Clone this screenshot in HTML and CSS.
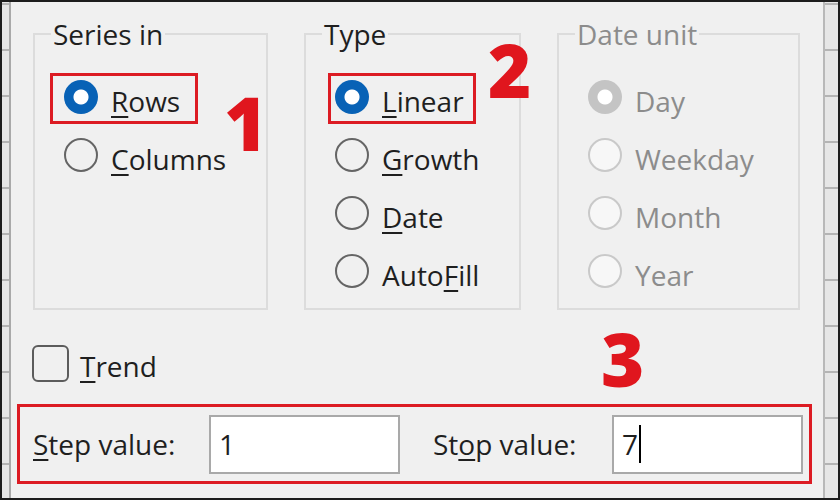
FILE: index.html
```html
<!DOCTYPE html>
<html>
<head>
<meta charset="UTF-8">
<link rel="stylesheet" href="styles.css">
</head>
<body>
<div class="screen">
	<div class="sheet left"></div>

	<div class="dialog">
		<div class="groups">
			<fieldset class="group series">
				<legend>Series in</legend>
				<div class="option marked"><span class="radio on"></span><span class="label"><u>R</u>ows</span></div>
				<div class="option"><span class="radio"></span><span class="label"><u>C</u>olumns</span></div>
			</fieldset>

			<fieldset class="group type">
				<legend>Type</legend>
				<div class="option marked"><span class="radio on"></span><span class="label"><u>L</u>inear</span></div>
				<div class="option"><span class="radio"></span><span class="label"><u>G</u>rowth</span></div>
				<div class="option"><span class="radio"></span><span class="label"><u>D</u>ate</span></div>
				<div class="option"><span class="radio"></span><span class="label">Auto<u>F</u>ill</span></div>
			</fieldset>

			<fieldset class="group unit disabled">
				<legend>Date unit</legend>
				<div class="option"><span class="radio on"></span><span class="label">Day</span></div>
				<div class="option"><span class="radio"></span><span class="label">Weekday</span></div>
				<div class="option"><span class="radio"></span><span class="label">Month</span></div>
				<div class="option"><span class="radio"></span><span class="label">Year</span></div>
			</fieldset>
		</div>

		<div class="trend">
			<span class="checkbox"></span><span class="label"><u>T</u>rend</span>
		</div>

		<div class="values">
			<div class="field">
				<span class="label"><u>S</u>tep value:</span>
				<div class="textbox">1</div>
			</div>
			<div class="field stop">
				<span class="label">St<u>o</u>p value:</span>
				<div class="textbox">7<span class="caret"></span></div>
			</div>
		</div>
	</div>

	<div class="sheet right"></div>

	<span class="mark n1">1</span>
	<span class="mark n2">2</span>
	<span class="mark n3">3</span>
</div>
</body>
</html>
```

FILE: styles.css
```css
body{
	margin:0;
	background:#1c1c1c;
}
.screen{
	position:relative;
	width:840px;
	height:500px;
	box-sizing:border-box;
	border:2px solid #1c1c1c;
	display:flex;
	font-family:"Open Sans", "Noto Sans", sans-serif;
	font-size:28px;
	color:#1f1f1f;
}
.sheet{
	background-color:#e6e6e6;
	background-image:repeating-linear-gradient(to bottom, transparent 0 1px, #b4b4b4 1px 3px, transparent 3px 46px);
}
.sheet.left{
	width:7px;
	border-right:2px solid #a9a9a9;
}
.sheet.right{
	width:13px;
	border-left:2px solid #b8b8b8;
}
.dialog{
	flex:1;
	background:#f0f0f0;
	padding-top:16px;
}

/* group boxes */
.groups{
	display:flex;
	gap:36px;
	margin-left:22px;
}
.group{
	margin:0;
	padding:18px 0 8px 0;
	border:2px solid #dcdcdc;
	min-width:0;
}
.group legend{
	margin-left:16px;
	padding:0 2px;
	line-height:32px;
}
.series{ width:235px; box-sizing:border-box; }
.type{ width:217px; box-sizing:border-box; }
.unit{ width:243px; box-sizing:border-box; }

.option{
	display:flex;
	align-items:center;
	width:fit-content;
	height:58px;
	margin-left:29px;
}
.option .label{
	margin-left:13px;
	margin-top:8px;
}
.option.marked{
	box-sizing:border-box;
	width:148px;
	height:51px;
	margin:5px 0 2px 15px;
	padding:0 0 3px 11px;
	border:3px solid #dc1b23;
}
.type .option.marked{
	margin-left:22px;
	padding-left:4px;
}
u{
	text-decoration-thickness:2px;
	text-underline-offset:4px;
}

.radio{
	width:34px;
	height:34px;
	box-sizing:border-box;
	border:2px solid #656565;
	border-radius:50%;
	flex:none;
}
.radio.on{
	border:none;
	background:radial-gradient(circle, #fff 0 7px, #0862b6 8px);
}
.disabled legend,
.disabled .label{
	color:#8c8c8c;
}
.disabled .radio{
	border-color:#c9c9c9;
	background:#f7f7f7;
}
.disabled .radio.on{
	border:none;
	background:radial-gradient(circle, #fff 0 7px, #c4c4c4 8px);
}

/* trend */
.trend{
	display:flex;
	align-items:center;
	height:37px;
	margin:35px 0 0 21px;
}
.checkbox{
	width:37px;
	height:37px;
	box-sizing:border-box;
	border:2px solid #5c5c5c;
	border-radius:6px;
}
.trend .label{
	margin-left:11px;
	margin-top:5px;
}

/* step / stop values */
.values{
	display:flex;
	align-items:center;
	height:80px;
	box-sizing:border-box;
	margin:22px 11px 0 6px;
	padding-left:13px;
	border:3px solid #dc1b23;
}
.field{
	display:flex;
	align-items:center;
}
.field .label{
	width:176px;
}
.field.stop{
	margin-left:33px;
}
.field.stop .label{
	width:179px;
}
.textbox{
	display:flex;
	align-items:center;
	width:191px;
	height:59px;
	box-sizing:border-box;
	padding-left:8px;
	background:#fff;
	border:2px solid #a9a9a9;
}
.caret{
	width:2px;
	height:38px;
	margin-left:1px;
	background:#000;
}

/* red annotation numbers */
.mark{
	position:absolute;
	font-family:"Open Sans", sans-serif;
	font-weight:800;
	font-size:74px;
	line-height:1;
	color:#e0161e;
}
.n1{ left:222px; top:84px; }
.n2{ left:486px; top:31px; }
.n3{ left:599px; top:320px; }
```
